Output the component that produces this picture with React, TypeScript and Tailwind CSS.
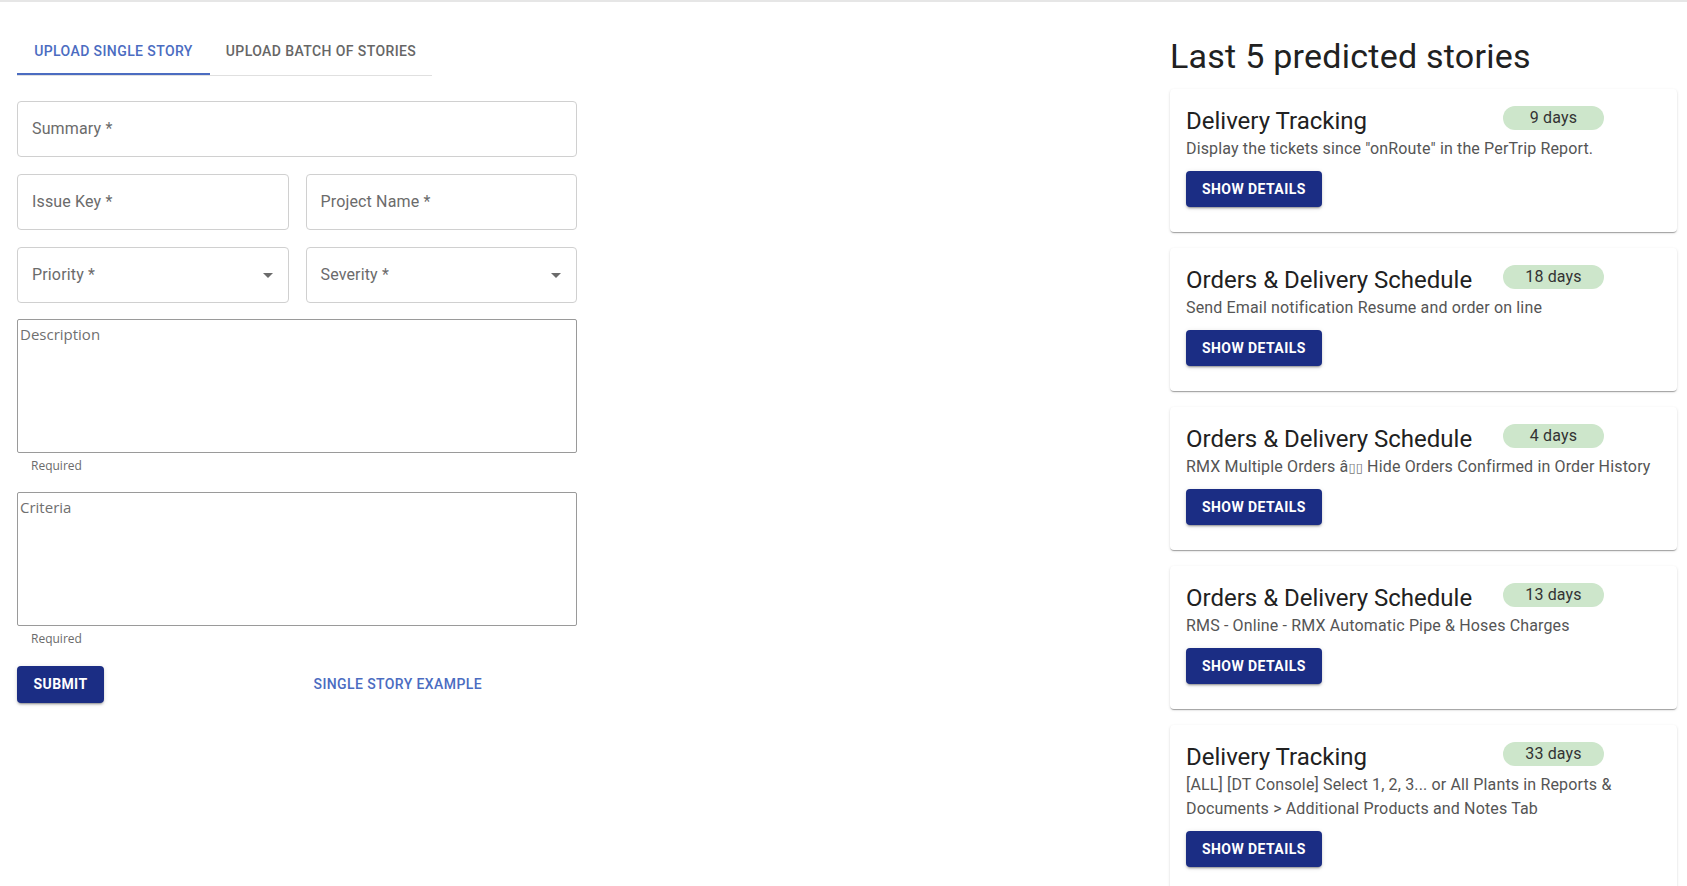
const STORIES = [
  {
    project: "Delivery Tracking",
    days: 9,
    summary: 'Display the tickets since "onRoute" in the PerTrip Report.',
  },
  {
    project: "Orders & Delivery Schedule",
    days: 18,
    summary: "Send Email notification Resume and order on line",
  },
  {
    project: "Orders & Delivery Schedule",
    days: 4,
    summary: "RMX Multiple Orders \u00e2\u25af\u25af Hide Orders Confirmed in Order History",
  },
  {
    project: "Orders & Delivery Schedule",
    days: 13,
    summary: "RMS - Online - RMX Automatic Pipe & Hoses Charges",
  },
  {
    project: "Delivery Tracking",
    days: 33,
    summary:
      "[ALL] [DT Console] Select 1, 2, 3... or All Plants in Reports & Documents > Additional Products and Notes Tab",
  },
];

const buttonShadow =
  "shadow-[0_3px_1px_-2px_rgba(0,0,0,0.2),0_2px_2px_0_rgba(0,0,0,0.14),0_1px_5px_0_rgba(0,0,0,0.12)]";

// the box glyphs stand in for a badly decoded dash, drawn like the tofu boxes
function Summary({ text }: { text: string }) {
  const parts = text.split(/(\u25af+)/);
  return (
    <>
      {parts.map((p, i) =>
        p.startsWith("\u25af") ? (
          <span
            key={i}
            className="font-['DejaVu_Sans',sans-serif] text-[13px] leading-none text-[#777]"
          >
            {p}
          </span>
        ) : (
          <span key={i}>{p}</span>
        )
      )}
    </>
  );
}

function OutlinedField({ label, select }: { label: string; select?: boolean }) {
  return (
    <div className="flex h-[56px] items-center justify-between rounded-[4px] border border-[#d0d0d0] pl-[14px] pr-[8px]">
      <span className="text-[16px] tracking-[0.15px] text-[#6b6b6b]">{label}</span>
      {select && (
        <svg viewBox="0 0 24 24" className="h-6 w-6 fill-[#6b6b6b]" aria-hidden="true">
          <path d="M7 10l5 5 5-5z" />
        </svg>
      )}
    </div>
  );
}

function AreaField({ placeholder }: { placeholder: string }) {
  return (
    <div>
      <textarea
        placeholder={placeholder}
        className="block h-[134px] w-full resize-none rounded-[2px] border border-[#9a9a9a] px-[2px] pb-[2px] pt-[4px] font-['Open_Sans',sans-serif] text-[15px] leading-[21px] outline-none placeholder:text-[#707070]"
      />
      <p className="ml-[14px] mt-[3px] font-['Open_Sans',sans-serif] text-[12px] leading-[20px] text-[#6b6b6b]">
        Required
      </p>
    </div>
  );
}

function StoryCard({ project, days, summary }: (typeof STORIES)[number]) {
  return (
    <div className="rounded-[4px] bg-white px-[16px] pb-[25px] pt-[16px] shadow-[0_2px_1px_-1px_rgba(0,0,0,0.2),0_1px_1px_0_rgba(0,0,0,0.14),0_1px_3px_0_rgba(0,0,0,0.12)]">
      <div className="grid grid-cols-[317px_101px] items-start">
        <h3 className="text-[24px] leading-[32px] text-[#212121]">{project}</h3>
        <span className="mt-[1px] h-[24px] rounded-full bg-[#cde6cb] text-center text-[16px] leading-[24px] tracking-[0.15px] text-[#333]">
          {days} days
        </span>
      </div>
      <p className="h-auto text-[16px] leading-[24px] tracking-[0.15px] text-[#555]">
        <Summary text={summary} />
      </p>
      <button
        className={`mt-[10px] h-[36px] rounded-[4px] bg-[#1b2d84] px-[16px] text-[14px] font-bold uppercase tracking-[0.03em] text-white ${buttonShadow}`}
      >
        Show details
      </button>
    </div>
  );
}

export default function App() {
  return (
    <div className="min-h-screen bg-white font-['Roboto',sans-serif]">
      <div className="h-[2px] bg-[#e6e6e6]" />
      <div className="flex">
        <div className="ml-[17px] w-[560px] pt-[25px]">
          <div className="flex w-[415px] border-b border-[#e0e0e0]">
            <button className="h-[48px] w-[193px] border-b-2 border-[#4b6cc1] pt-[2px] text-[14px] font-medium uppercase tracking-[0.4px] text-[#4b6cc1]">
              Upload single story
            </button>
            <button className="h-[48px] w-[222px] text-[14px] font-medium uppercase tracking-[0.4px] text-[#666]">
              Upload batch of stories
            </button>
          </div>

          <form className="mt-[25px] flex flex-col">
            <OutlinedField label="Summary *" />
            <div className="mt-[17px] grid grid-cols-2 gap-[17px]">
              <OutlinedField label="Issue Key *" />
              <OutlinedField label="Project Name *" />
            </div>
            <div className="mt-[17px] grid grid-cols-2 gap-[17px]">
              <OutlinedField label="Priority *" select />
              <OutlinedField label="Severity *" select />
            </div>
            <div className="mt-[16px]">
              <AreaField placeholder="Description" />
            </div>
            <div className="mt-[16px]">
              <AreaField placeholder="Criteria" />
            </div>
            <div className="mt-[17px] grid grid-cols-2 gap-[17px]">
              <div>
                <button
                  type="button"
                  className={`h-[37px] w-[87px] rounded-[4px] bg-[#1b2d84] text-[14px] font-bold uppercase tracking-[0.4px] text-white ${buttonShadow}`}
                >
                  Submit
                </button>
              </div>
              <div>
                <button
                  type="button"
                  className="h-[37px] px-[8px] text-[14px] font-medium uppercase tracking-[0.4px] text-[#4b6cc1]"
                >
                  Single story example
                </button>
              </div>
            </div>
          </form>
        </div>

        <div className="ml-auto mr-[10px] w-[507px] pt-[33px]">
          <h2 className="text-[34px] leading-[42px] tracking-[0.25px] text-[#212121]">
            Last 5 predicted stories
          </h2>
          <div className="mt-[12px] flex flex-col gap-[16px]">
            {STORIES.map((s, i) => (
              <StoryCard key={i} {...s} />
            ))}
          </div>
        </div>
      </div>
    </div>
  );
}
